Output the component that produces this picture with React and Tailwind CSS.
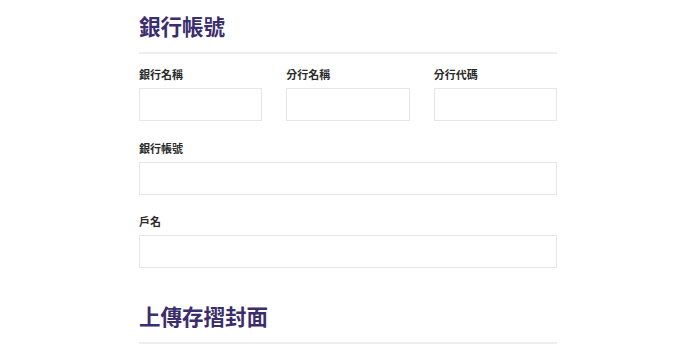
import React from "react";

const Field = ({ label, className = "" }) => (
  <div className={className}>
    <label className="block text-[11px] leading-4 font-bold text-[#2b2b2b]">{label}</label>
    <input
      type="text"
      className="mt-[6px] block h-[33px] w-full border border-[#e6e6e6] bg-white outline-none"
    />
  </div>
);

const SectionTitle = ({ children, className = "" }) => (
  <div className={className}>
    <h2 className="text-[21.5px] leading-7 font-bold text-[#3a2e6d]">{children}</h2>
    <div className="mt-[12px] h-[2px] bg-[#eeeeee]" />
  </div>
);

const App = () => {
  return (
    <div
      className="min-h-screen bg-white"
      style={{ fontFamily: '"Noto Sans CJK TC", "Noto Sans", sans-serif' }}
    >
      <div className="ml-[139px] w-[418px] pt-[12px]">
        <SectionTitle>銀行帳號</SectionTitle>

        <div className="mt-[12px] grid grid-cols-3 gap-x-6">
          <Field label="銀行名稱" />
          <Field label="分行名稱" />
          <Field label="分行代碼" />
        </div>

        <Field label="銀行帳號" className="mt-[19px]" />
        <Field label="戶名" className="mt-[18px]" />

        <SectionTitle className="mt-[34px]">上傳存摺封面</SectionTitle>
      </div>
    </div>
  );
};

export default App;
